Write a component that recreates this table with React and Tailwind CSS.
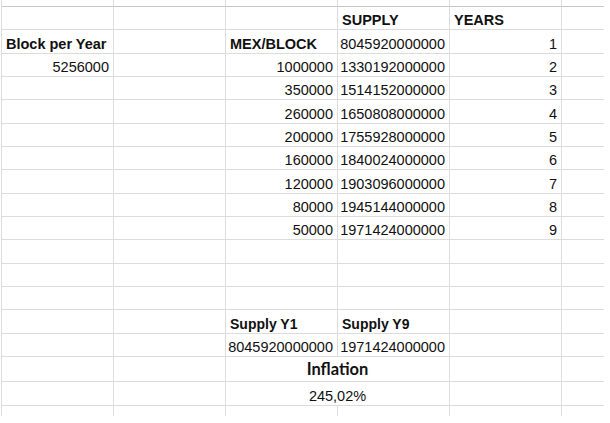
import React from "react";

const W = ["w-[112px] border-r", "w-[112px] border-r", "w-[112px] border-r", "w-[112px] border-r", "w-[112px] border-r", "w-[42px]"];

const B = (t) => ({ t, b: true, a: "l" });
const R = (t) => ({ t, a: "r" });

const rows = [
  ["", "", "", B("SUPPLY"), B("YEARS"), ""],
  [B("Block per Year"), "", B("MEX/BLOCK"), R("8045920000000"), R("1"), ""],
  [R("5256000"), "", R("1000000"), R("1330192000000"), R("2"), ""],
  ["", "", R("350000"), R("1514152000000"), R("3"), ""],
  ["", "", R("260000"), R("1650808000000"), R("4"), ""],
  ["", "", R("200000"), R("1755928000000"), R("5"), ""],
  ["", "", R("160000"), R("1840024000000"), R("6"), ""],
  ["", "", R("120000"), R("1903096000000"), R("7"), ""],
  ["", "", R("80000"), R("1945144000000"), R("8"), ""],
  ["", "", R("50000"), R("1971424000000"), R("9"), ""],
  ["", "", "", "", "", ""],
  ["", "", "", "", "", ""],
  ["", "", "", "", "", ""],
  ["", "", { t: "Supply Y1", b: true, a: "l", s: "sy" }, { t: "Supply Y9", b: true, a: "l", s: "sy" }, "", ""],
  ["", "", R("8045920000000"), R("1971424000000"), "", ""],
];

function Cell({ w, c }) {
  const d = typeof c === "string" ? { t: c } : c;
  const align = d.a === "r" ? "justify-end" : d.a === "c" ? "justify-center" : "justify-start";
  const font =
    d.s === "sy"
      ? "text-[14px] font-bold"
      : d.b
      ? "text-[14.5px] font-bold"
      : "text-[14.5px]";
  return (
    <div className={`${w} h-full border-[#dcdcdc] flex items-end px-[4px] ${align} shrink-0 overflow-visible whitespace-nowrap`}>
      <span className={`${font} leading-[17px] text-[#111]`}>{d.t}</span>
    </div>
  );
}

export default function App() {
  return (
    <div className="w-[610px] h-[423px] bg-white overflow-hidden" style={{ fontFamily: '"Liberation Sans", Arial, sans-serif' }}>
      <div className="ml-[1px] w-[603px] border-l border-[#dcdcdc]">
        <div className="flex h-[7px] border-b border-[#c4c7cb]">
          {W.map((w, i) => (
            <div key={i} className={`${w} h-full border-[#dcdcdc] shrink-0`} />
          ))}
        </div>
        {rows.map((r, i) => (
          <div key={i} className="flex h-[23.33px] border-b border-[#dcdcdc]">
            {r.map((c, j) => (
              <Cell key={j} w={W[j]} c={c} />
            ))}
          </div>
        ))}
        <div className="flex h-[25.5px] border-b border-[#dcdcdc]">
          <Cell w={W[0]} c="" />
          <Cell w={W[1]} c="" />
          <div className="w-[224px] h-full border-r border-[#dcdcdc] flex items-end justify-center shrink-0 pb-[2px]">
            <span className="text-[16.5px] font-bold leading-[20px] text-[#111]" style={{ fontFamily: "Lato, sans-serif" }}>Inflation</span>
          </div>
          <Cell w={W[4]} c="" />
          <Cell w={W[5]} c="" />
        </div>
        <div className="flex h-[23.33px] border-b border-[#dcdcdc]">
          <Cell w={W[0]} c="" />
          <Cell w={W[1]} c="" />
          <div className="w-[224px] h-full border-r border-[#dcdcdc] flex items-end justify-center shrink-0">
            <span className="text-[14.5px] leading-[17px] text-[#111]">245,02%</span>
          </div>
          <Cell w={W[4]} c="" />
          <Cell w={W[5]} c="" />
        </div>
        <div className="flex h-[10.5px]">
          {W.map((w, i) => (
            <div key={i} className={`${w} h-full border-[#dcdcdc] shrink-0`} />
          ))}
        </div>
      </div>
    </div>
  );
}
